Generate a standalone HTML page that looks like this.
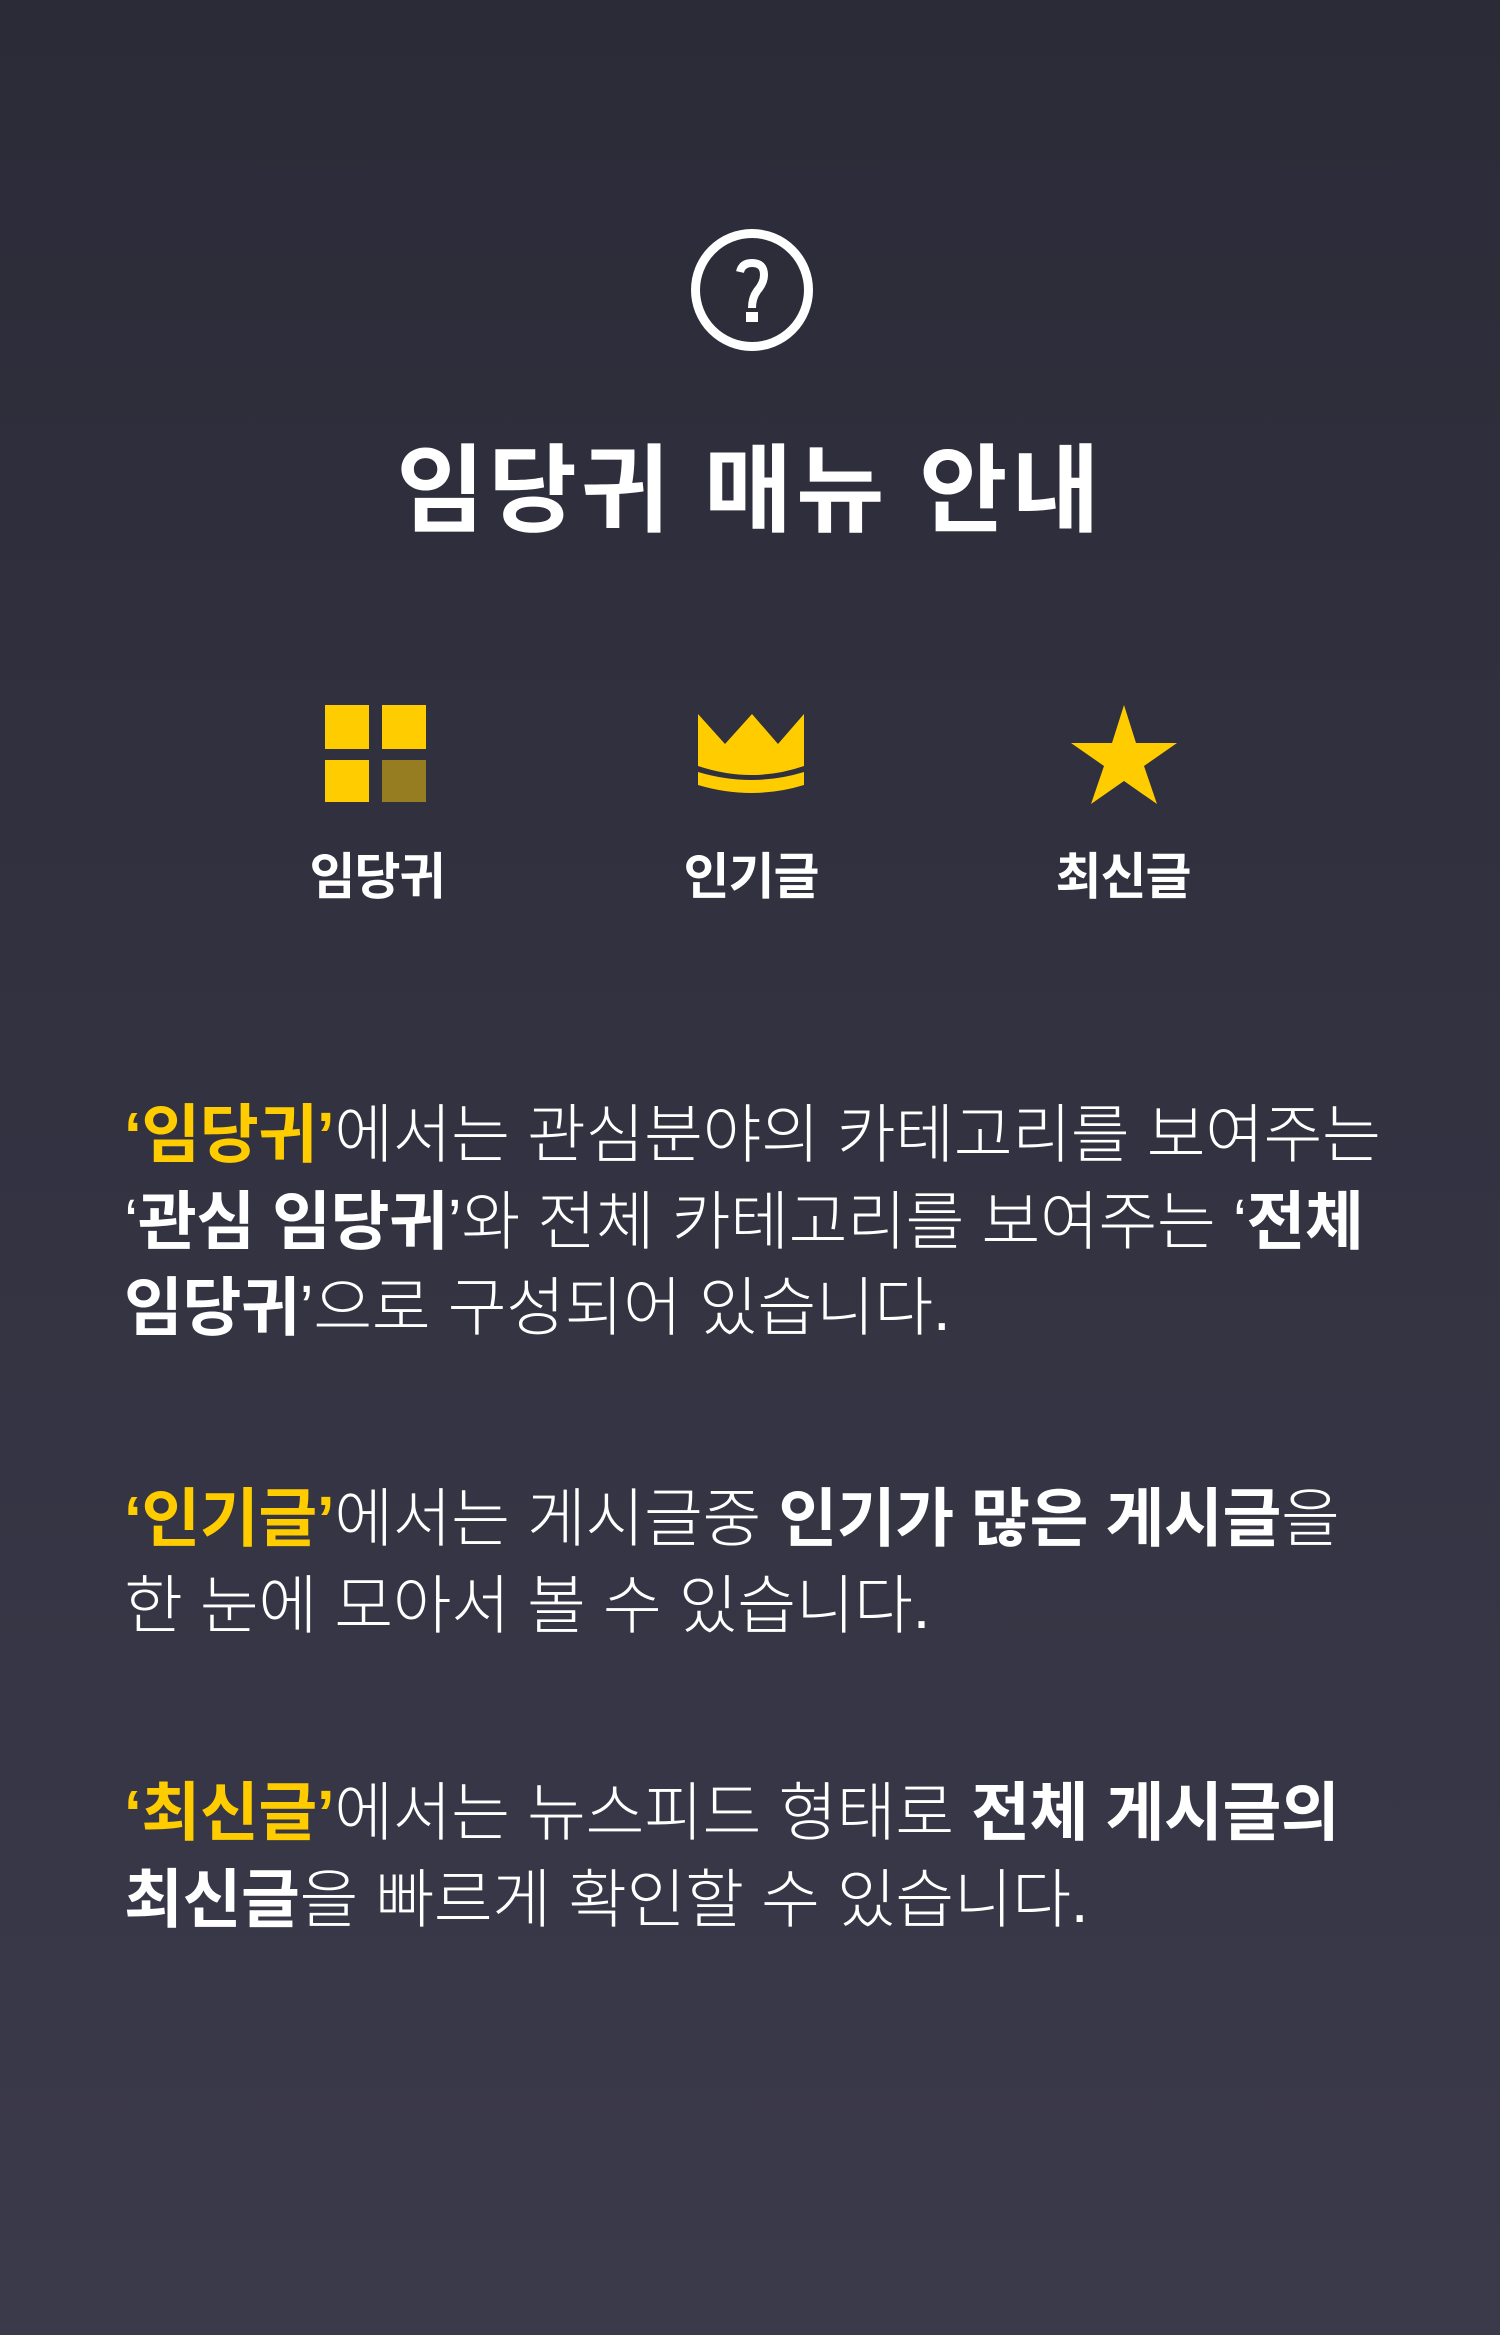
<!DOCTYPE html>
<html><head><meta charset="utf-8"><style>
html,body{margin:0;padding:0}
body{width:1500px;height:2335px;position:relative;overflow:hidden;background:linear-gradient(#2b2b38,#3b3a4b);font-family:"Liberation Sans","Noto Sans CJK KR",sans-serif;color:#fff}
.t{position:absolute;white-space:nowrap}
.title{left:0;width:1500px;text-align:center;top:432px;font-size:96px;font-weight:700;letter-spacing:4px;line-height:120px}
.lab{font-size:50px;font-weight:700;width:300px;text-align:center;top:842px;line-height:70px;letter-spacing:-1px}
.p{left:124px;font-size:64px;letter-spacing:-0.4px;line-height:86.5px;font-weight:300}
.y{color:#ffcc00;font-weight:700}
b{font-weight:700}
</style></head><body>
<svg class="t" style="left:0;top:0" width="1500" height="900" viewBox="0 0 1500 900">
<circle cx="752" cy="290" r="56.5" fill="none" stroke="#fff" stroke-width="9"/>
<path d="M740 272 Q742 263 752 263 Q764 263 764 275 Q764 283 757 291 Q752 298 752 308" fill="none" stroke="#fff" stroke-width="8"/>
<rect x="746" y="312" width="12" height="10" fill="#fff"/>
<rect x="325" y="705" width="44" height="44" fill="#ffcc00"/>
<rect x="382" y="705" width="44" height="44" fill="#ffcc00"/>
<rect x="325" y="760" width="44" height="42" fill="#ffcc00"/>
<rect x="382" y="760" width="44" height="42" fill="#967d22"/>
<path d="M698 714 L725 744 L752 714 L778 744 L804 714 L804 766 Q752 784 698 766 Z" fill="#ffcc00"/>
<path d="M698 772 Q752 788 804 772 L804 785 Q752 801 698 785 Z" fill="#ffcc00"/>
<path d="M1124 705 L1136 743 L1177 743 L1144 766 L1157 804 L1124 781 L1091 804 L1104 766 L1071 743 L1112 743 Z" fill="#ffcc00"/>
</svg>
<div class="t title">임당귀 매뉴 안내</div>
<div class="t lab" style="left:227px">임당귀</div>
<div class="t lab" style="left:601px">인기글</div>
<div class="t lab" style="left:973px">최신글</div>
<div class="t p" style="top:1092px"><span class="y">‘임당귀’</span>에서는 관심분야의 카테고리를 보여주는<br>‘<b>관심 임당귀</b>’와 전체 카테고리를 보여주는 ‘<b>전체</b><br><b>임당귀</b>’으로 구성되어 있습니다.</div>
<div class="t p" style="top:1476px"><span class="y">‘인기글’</span>에서는 게시글중 <b>인기가 많은 게시글</b>을<br>한 눈에 모아서 볼 수 있습니다.</div>
<div class="t p" style="top:1770px"><span class="y">‘최신글’</span>에서는 뉴스피드 형태로 <b>전체 게시글의</b><br><b>최신글</b>을 빠르게 확인할 수 있습니다.</div>
</body></html>
